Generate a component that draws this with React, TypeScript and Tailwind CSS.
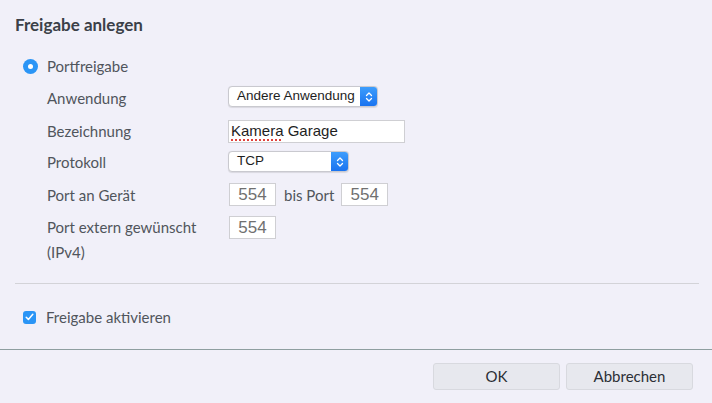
import React from "react";

const Chevrons = () => (
  <svg width="8" height="12" viewBox="0 0 8 12" fill="none">
    <path d="M1.5 4.5 L4 2 L6.5 4.5" stroke="white" strokeWidth="1.3" strokeLinecap="round" strokeLinejoin="round" />
    <path d="M1.5 7.5 L4 10 L6.5 7.5" stroke="white" strokeWidth="1.3" strokeLinecap="round" strokeLinejoin="round" />
  </svg>
);

const Select = ({ value, w }: { value: string; w: string }) => (
  <div className={`flex h-[21px] ${w} rounded-[4px] border border-[#c9c9cf] bg-white overflow-hidden shadow-[0_0.5px_1px_rgba(0,0,0,0.1)]`}>
    <div className="flex-1 flex items-center pl-[8px] text-[13.5px] text-[#1e1e1e] font-['Liberation_Sans',sans-serif]">{value}</div>
    <div className="w-[17px] flex items-center justify-center bg-gradient-to-b from-[#3d9dfc] to-[#1a73f0]">
      <Chevrons />
    </div>
  </div>
);

const PortInput = ({ value }: { value: string }) => (
  <div className="h-[23px] w-[47px] border border-[#cfcfd3] bg-white flex items-center justify-center text-[17px] text-[#707070] font-['Liberation_Sans',sans-serif] font-light">
    {value}
  </div>
);

export default function App() {
  const label = "w-[181px] shrink-0 text-[15px] text-[#50555c]";
  return (
    <div className="w-[712px] h-[403px] bg-[#f1f0f9] flex flex-col font-['Lato',sans-serif] overflow-hidden">
      <div className="px-[15px] pt-[14px] text-[17px] font-bold text-[#3b4048] leading-[22px]">Freigabe anlegen</div>
      <div className="flex items-center pl-[23px] mt-[20px] h-[20px]">
        <div className="w-[15px] h-[15px] rounded-full bg-[#2b95f6] flex items-center justify-center">
          <div className="w-[5px] h-[5px] rounded-full bg-white" />
        </div>
        <span className="ml-[9px] text-[15px] text-[#50555c]">Portfreigabe</span>
      </div>
      <div className="pl-[47px] flex flex-col mt-[10px]">
        <div className="flex items-center h-[21px]">
          <div className={`${label} pt-[3px]`}>Anwendung</div>
          <Select value="Andere Anwendung" w="w-[150px]" />
        </div>
        <div className="flex items-center h-[23px] mt-[13px]">
          <div className={label}>Bezeichnung</div>
          <div className="h-[23px] w-[177px] border border-[#cfcfd3] bg-white flex items-center pl-[2px] text-[15px] text-[#1e1e1e] font-['Liberation_Sans',sans-serif]">
            <span className="underline decoration-dotted decoration-[#e0403c] decoration-[1.5px] underline-offset-[3px]">Kamera</span>
            <span>&nbsp;Garage</span>
          </div>
        </div>
        <div className="flex items-center h-[21px] mt-[8px]">
          <div className={`${label} pt-[2px]`}>Protokoll</div>
          <Select value="TCP" w="w-[121px]" />
        </div>
        <div className="flex items-center h-[23px] mt-[11px]">
          <div className={`${label} pt-[1px]`}>Port an Gerät</div>
          <div className="ml-[1px] flex items-center">
            <PortInput value="554" />
            <span className="ml-[8px] mr-[7px] pt-[1px] text-[15px] text-[#50555c]">bis Port</span>
            <PortInput value="554" />
          </div>
        </div>
        <div className="flex items-start mt-[10px]">
          <div className={`${label} leading-[25px] mt-[-1px]`}>
            Port extern gewünscht
            <br />
            (IPv4)
          </div>
          <div className="ml-[1px]">
            <PortInput value="554" />
          </div>
        </div>
      </div>
      <div className="mx-[15px] mt-[18px] h-px bg-[#d3d3d8] w-[684px]" />
      <div className="flex items-center pl-[23px] mt-[26px] h-[14px]">
        <div className="w-[13px] h-[13px] rounded-[3px] bg-[#2b95f6] flex items-center justify-center">
          <svg width="9" height="8" viewBox="0 0 9 8" fill="none">
            <path d="M1.2 4.2 L3.4 6.4 L7.8 1.3" stroke="white" strokeWidth="1.5" strokeLinecap="round" strokeLinejoin="round" />
          </svg>
        </div>
        <span className="ml-[10px] pt-[1px] text-[15px] text-[#50555c]">Freigabe aktivieren</span>
      </div>
      <div className="mt-[25px] h-px bg-[#8e9ea0]" />
      <div className="flex justify-end pr-[19px] mt-[13px] gap-[6px]">
        <button className="w-[127px] h-[27px] rounded-[3px] border border-[#d8d9df] bg-[#e7e8ee] text-[15px] text-[#2b2f35]">OK</button>
        <button className="w-[127px] h-[27px] rounded-[3px] border border-[#d8d9df] bg-[#e7e8ee] text-[15px] text-[#2b2f35]">Abbrechen</button>
      </div>
    </div>
  );
}
